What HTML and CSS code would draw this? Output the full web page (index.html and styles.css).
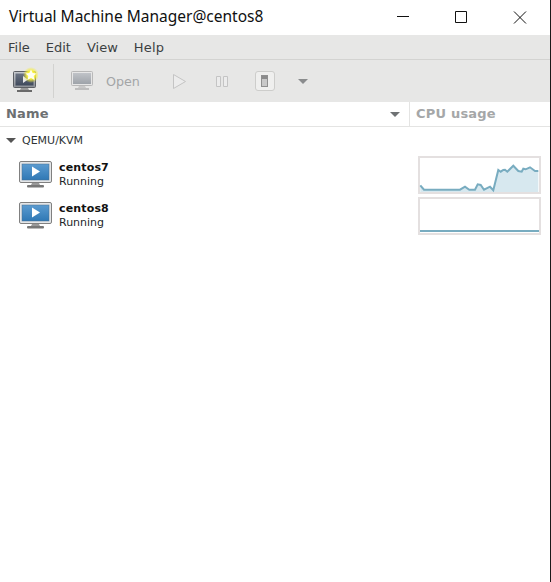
FILE: index.html
```html
<!DOCTYPE html>
<html lang="en">
<head>
<meta charset="utf-8">
<title>Virtual Machine Manager@centos8</title>
<link rel="stylesheet" href="styles.css">
</head>
<body>
<div class="window">
  <header class="titlebar">
    <div class="title">Virtual Machine Manager@centos8</div>
    <div class="controls">
      <svg class="ctl" width="14" height="14" viewBox="0 0 14 14"><path d="M2 5.500H14" stroke="#111" fill="none"/></svg>
      <svg class="ctl" width="14" height="14" viewBox="0 0 14 14"><path d="M1.500 0.500H12.500V11.500H1.500Z" stroke="#111" fill="none"/></svg>
      <svg class="ctl" width="14" height="14" viewBox="0 0 14 14"><path d="M1 0.500L13 12.500M13 0.500L1 12.500" stroke="#111" fill="none"/></svg>
    </div>
  </header>
  <nav class="menubar">
    <span>File</span><span>Edit</span><span>View</span><span class="help">Help</span>
  </nav>
  <div class="toolbar">
    <svg class="new-icon" width="28" height="28" viewBox="0 0 28 28">
      <defs>
        <linearGradient id="scr" x1="0" y1="0" x2="0" y2="1"><stop offset="0" stop-color="#6d7584"/><stop offset="1" stop-color="#3f4a5c"/></linearGradient>
        <linearGradient id="bez" x1="0" y1="0" x2="0" y2="1"><stop offset="0" stop-color="#c9ccd0"/><stop offset="1" stop-color="#8b8f95"/></linearGradient>
        <radialGradient id="glow"><stop offset="0.5" stop-color="#f8f03a"/><stop offset="1" stop-color="#f5ec3c" stop-opacity="0"/></radialGradient>
      </defs>
      <rect x="3.500" y="4.500" width="22" height="16" rx="1" fill="url(#bez)" stroke="#5c5f64"/>
      <rect x="5.500" y="6.500" width="18" height="12" fill="url(#scr)"/>
      <path d="M13 9V16L18 12.500Z" fill="#e8e8e8"/>
      <path d="M11 21h7l1 2H10z" fill="#999"/><rect x="7" y="23" width="15" height="2" fill="#6a6a6a"/>
      <circle cx="21" cy="8" r="8" fill="url(#glow)"/>
      <path d="M21 2.500l1.700 3.500 3.800.5-2.800 2.600.8 3.800-3.500-1.900-3.500 1.900.8-3.800-2.800-2.600 3.800-.5z" fill="#fffef0"/>
    </svg>
    <div class="sep"></div>
    <svg class="open-icon" width="22" height="22" viewBox="0 0 22 22">
      <defs><linearGradient id="scr2" x1="0" y1="0" x2="0" y2="1"><stop offset="0" stop-color="#c0c3c8"/><stop offset="1" stop-color="#9ea3a9"/></linearGradient></defs>
      <rect x="0.500" y="1.500" width="21" height="14" rx="1" fill="#e6e6e6" stroke="#b8b8b8"/>
      <rect x="2" y="3" width="18" height="11" fill="url(#scr2)"/>
      <path d="M8 16h6l1 2H7z" fill="#c8c8c8"/><rect x="4" y="18" width="14" height="2" fill="#bdbdbd"/>
    </svg>
    <span class="open-label">Open</span>
    <svg class="play" width="15" height="17" viewBox="0 0 15 17"><path d="M1.500 1.500V15.500L13.500 8.500Z" fill="#ececec" stroke="#c4c4c4"/></svg>
    <svg class="pause" width="14" height="13" viewBox="0 0 14 13"><path d="M1.500 1.500H5.500V11.500H1.500ZM8.500 1.500H12.500V11.500H8.500Z" fill="#ececec" stroke="#c4c4c4"/></svg>
    <div class="stop-btn"><span class="stop-glyph"></span></div>
    <span class="caret tool-caret"></span>
  </div>
  <div class="columns">
    <div class="col-name"><span>Name</span><span class="caret"></span></div>
    <div class="col-cpu">CPU usage</div>
  </div>
  <main class="list">
    <div class="group"><span class="caret dark"></span><span>QEMU/KVM</span></div>
    <div class="vm">
      <svg class="vm-icon" width="33" height="27" viewBox="0 0 33 27">
        <use href="#monitor"/>
      </svg>
      <div class="vm-text"><strong>centos7</strong><span>Running</span></div>
      <svg class="graph" width="123" height="38" viewBox="0 0 123 38">
        <rect x="1" y="1" width="121" height="36" fill="#fff" stroke="#e4e0e0" stroke-width="2"/>
        <path d="M2.300 29.300L6 33.700H42L47 30.700 51.300 33.700H57L59.700 28.300 62.700 29 66 33.700 72 30.700 75.300 34.300 80.300 14 82.700 15.700 85.300 14 87 13.700 89.300 15.700 95.300 9.700 100.300 15 103.700 15.700 105.300 12.700 107.700 13.300 112 11.300 117 15 120.300 15V36H2.300Z" fill="#d7e8ef"/>
        <path d="M2.300 29.300L6 33.700H42L47 30.700 51.300 33.700H57L59.700 28.300 62.700 29 66 33.700 72 30.700 75.300 34.300 80.300 14 82.700 15.700 85.300 14 87 13.700 89.300 15.700 95.300 9.700 100.300 15 103.700 15.700 105.300 12.700 107.700 13.300 112 11.300 117 15 120.300 15" fill="none" stroke="#78acc0" stroke-width="2"/>
      </svg>
    </div>
    <div class="vm">
      <svg class="vm-icon" width="33" height="27" viewBox="0 0 33 27">
        <use href="#monitor"/>
      </svg>
      <div class="vm-text"><strong>centos8</strong><span>Running</span></div>
      <svg class="graph" width="123" height="38" viewBox="0 0 123 38">
        <rect x="1" y="1" width="121" height="36" fill="#fff" stroke="#e4e0e0" stroke-width="2"/>
        <path d="M2 34H121" fill="none" stroke="#78acc0" stroke-width="2"/>
      </svg>
    </div>
  </main>
</div>
<svg class="defs" width="0" height="0">
  <defs>
    <linearGradient id="blue" x1="0" y1="0" x2="0" y2="1"><stop offset="0" stop-color="#5b9bd0"/><stop offset="1" stop-color="#2f78b5"/></linearGradient>
    <g id="monitor">
      <rect x="0.500" y="0.500" width="32" height="21" rx="1.500" fill="#e4e6e8" stroke="#808080"/>
      <rect x="3" y="3" width="27" height="16" fill="url(#blue)" stroke="#4a6f8f" stroke-width="0.500"/>
      <path d="M13 5.500V15.500L21 10.500Z" fill="#fff"/>
      <path d="M13 22h7l1 2H12z" fill="#999"/>
      <rect x="8" y="24" width="17" height="2.500" rx="1" fill="#777"/>
    </g>
  </defs>
</svg>
</body>
</html>
```
FILE: styles.css
```css
* { box-sizing: border-box; }
html, body { margin: 0; height: 100%; background: #fff; }
body { font-family: "DejaVu Sans", sans-serif; overflow: hidden; }
.window { width: 551px; height: 582px; display: flex; flex-direction: column; background: #fff; border-right: 1px solid #1a1a1a; }
.defs { position: absolute; }

.titlebar { height: 35px; flex: none; display: flex; align-items: center; justify-content: space-between; }
.title { font-family: "Noto Sans", "Liberation Sans", sans-serif; font-size: 15.5px; color: #111; padding-left: 9px; margin-top: -3px; }
.controls { display: flex; gap: 45px; padding-right: 23px; }
.ctl { display: block; }

.menubar { height: 25px; flex: none; display: flex; align-items: center; gap: 16px; padding-left: 8px; background: #e7e7e6; border-bottom: 1px solid #d3d3d1; font-size: 13px; color: #3b3f42; }
.help { letter-spacing: 0.2px; }

.toolbar { height: 42px; flex: none; display: flex; align-items: center; background: #e7e7e6; padding-left: 10px; }
.new-icon { display: block; flex: none; }
.sep { width: 1px; height: 34px; background: #d2d2d0; margin-left: 15px; margin-right: 17px; }
.open-icon { display: block; flex: none; }
.open-label { margin-left: 13px; font-size: 12.7px; color: #a3a5a6; }
.play { margin-left: 32px; flex: none; }
.pause { margin-left: 28px; flex: none; }
.stop-btn { margin-left: 26px; width: 20px; height: 20px; border: 1px solid #cdcdcb; border-radius: 3px; background: #efefee; display: flex; align-items: center; justify-content: center; }
.stop-glyph { width: 7px; height: 12px; background: linear-gradient(#8b8b8b 30%, #c8c8c8 30%); border: 1px solid #8f8f8f; }
.caret { width: 0; height: 0; border-left: 5px solid transparent; border-right: 5px solid transparent; border-top: 5px solid #6f7274; }
.tool-caret { margin-left: 23px; border-top-color: #8a8c8d; }

.columns { height: 25px; flex: none; display: flex; border-bottom: 1px solid #e4e4e3; font-weight: 700; font-size: 13px; letter-spacing: 0.2px; }
.col-name { width: 410px; display: flex; align-items: center; justify-content: space-between; padding: 0 9px 2px 6px; border-right: 1px solid #e4e4e3; color: #6d7072; }
.col-name .caret { margin-top: 2px; }
.col-cpu { flex: 1; display: flex; align-items: center; padding: 0 0 2px 6px; color: #a5a7a8; }

.list { flex: 1; display: flex; flex-direction: column; }
.group { height: 27px; display: flex; align-items: center; gap: 6px; padding-left: 6px; font-size: 11px; color: #2e3436; }
.caret.dark { border-top-color: #555; }
.vm { height: 41px; display: flex; align-items: center; padding-left: 19px; position: relative; }
.vm-icon { display: block; flex: none; }
.vm-text { display: flex; flex-direction: column; margin-left: 7px; font-size: 11px; line-height: 14px; color: #23272a; flex: 1; }
.vm-text strong { color: #111; letter-spacing: 0.15px; }
.graph { display: block; flex: none; margin-right: 9px; }
```
